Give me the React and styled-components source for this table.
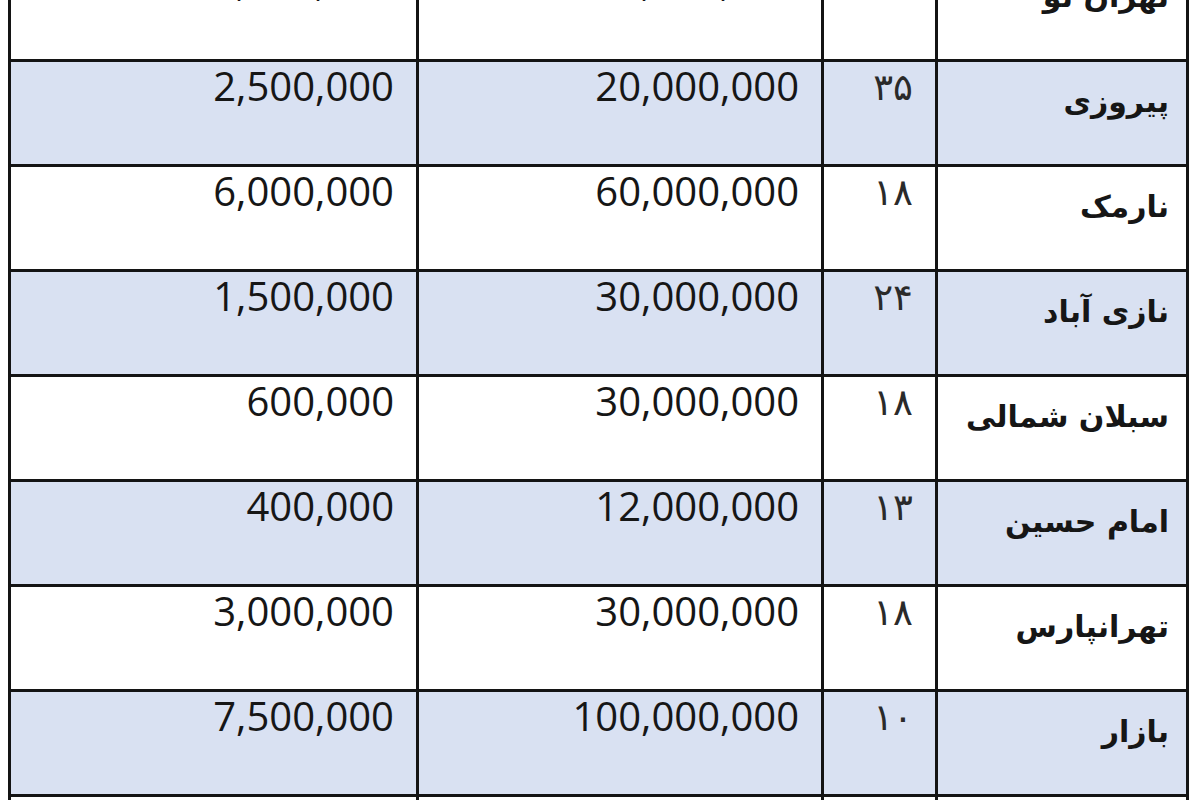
import React from "react";
import styled, { createGlobalStyle } from "styled-components";

const GlobalStyle = createGlobalStyle`
  html, body {
    margin: 0;
    padding: 0;
    background: #ffffff;
    overflow: hidden;
  }
`;

const Page = styled.div`
  width: 1200px;
  height: 800px;
  overflow: hidden;
  background: #fff;
  padding-left: 8px;
  box-sizing: border-box;
`;

const Grid = styled.div`
  display: grid;
  grid-template-columns: 408px 405px 114px 251px;
  grid-auto-rows: 105px;
  margin-top: -43px;
  border-left: 3px solid #141414;
  width: max-content;
`;

const Cell = styled.div`
  box-sizing: border-box;
  border-right: 3px solid #141414;
  border-bottom: 3px solid #141414;
  background: ${p => (p.shaded ? "#d9e1f2" : "#ffffff")};
  color: #161616;
  text-align: right;
  padding-right: 20px;
`;

const Amount = styled(Cell)`
  font-family: "Open Sans", "Liberation Sans", sans-serif;
  font-size: 40px;
  line-height: 48px;
  padding-right: 22px;
`;

const Count = styled(Cell)`
  font-family: "DejaVu Sans", sans-serif;
  font-size: 37px;
  line-height: 52px;
  padding-right: 22px;
  color: #2a2a2a;
`;

const Name = styled(Cell)`
  font-family: "DejaVu Sans", sans-serif;
  font-weight: bold;
  font-size: 30px;
  line-height: 40px;
  padding-top: 20px;
  padding-right: 17px;
  direction: rtl;
  text-align: right;
`;

const rows = [
  { name: "تهران نو", count: "۲۰", price: "40,000,000", rent: "4,000,000" },
  { name: "پیروزی", count: "۳۵", price: "20,000,000", rent: "2,500,000" },
  { name: "نارمک", count: "۱۸", price: "60,000,000", rent: "6,000,000" },
  { name: "نازی آباد", count: "۲۴", price: "30,000,000", rent: "1,500,000" },
  { name: "سبلان شمالی", count: "۱۸", price: "30,000,000", rent: "600,000" },
  { name: "امام حسین", count: "۱۳", price: "12,000,000", rent: "400,000" },
  { name: "تهرانپارس", count: "۱۸", price: "30,000,000", rent: "3,000,000" },
  { name: "بازار", count: "۱۰", price: "100,000,000", rent: "7,500,000" },
  { name: "ونک", count: "۱۵", price: "80,000,000", rent: "5,000,000" },
];

export default function App() {
  return (
    <>
      <GlobalStyle />
      <Page>
        <Grid>
          {rows.map((r, i) => {
            const shaded = i % 2 === 1;
            return (
              <React.Fragment key={i}>
                <Amount shaded={shaded}>{r.rent}</Amount>
                <Amount shaded={shaded}>{r.price}</Amount>
                <Count shaded={shaded}>{r.count}</Count>
                <Name shaded={shaded}>{r.name}</Name>
              </React.Fragment>
            );
          })}
        </Grid>
      </Page>
    </>
  );
}
